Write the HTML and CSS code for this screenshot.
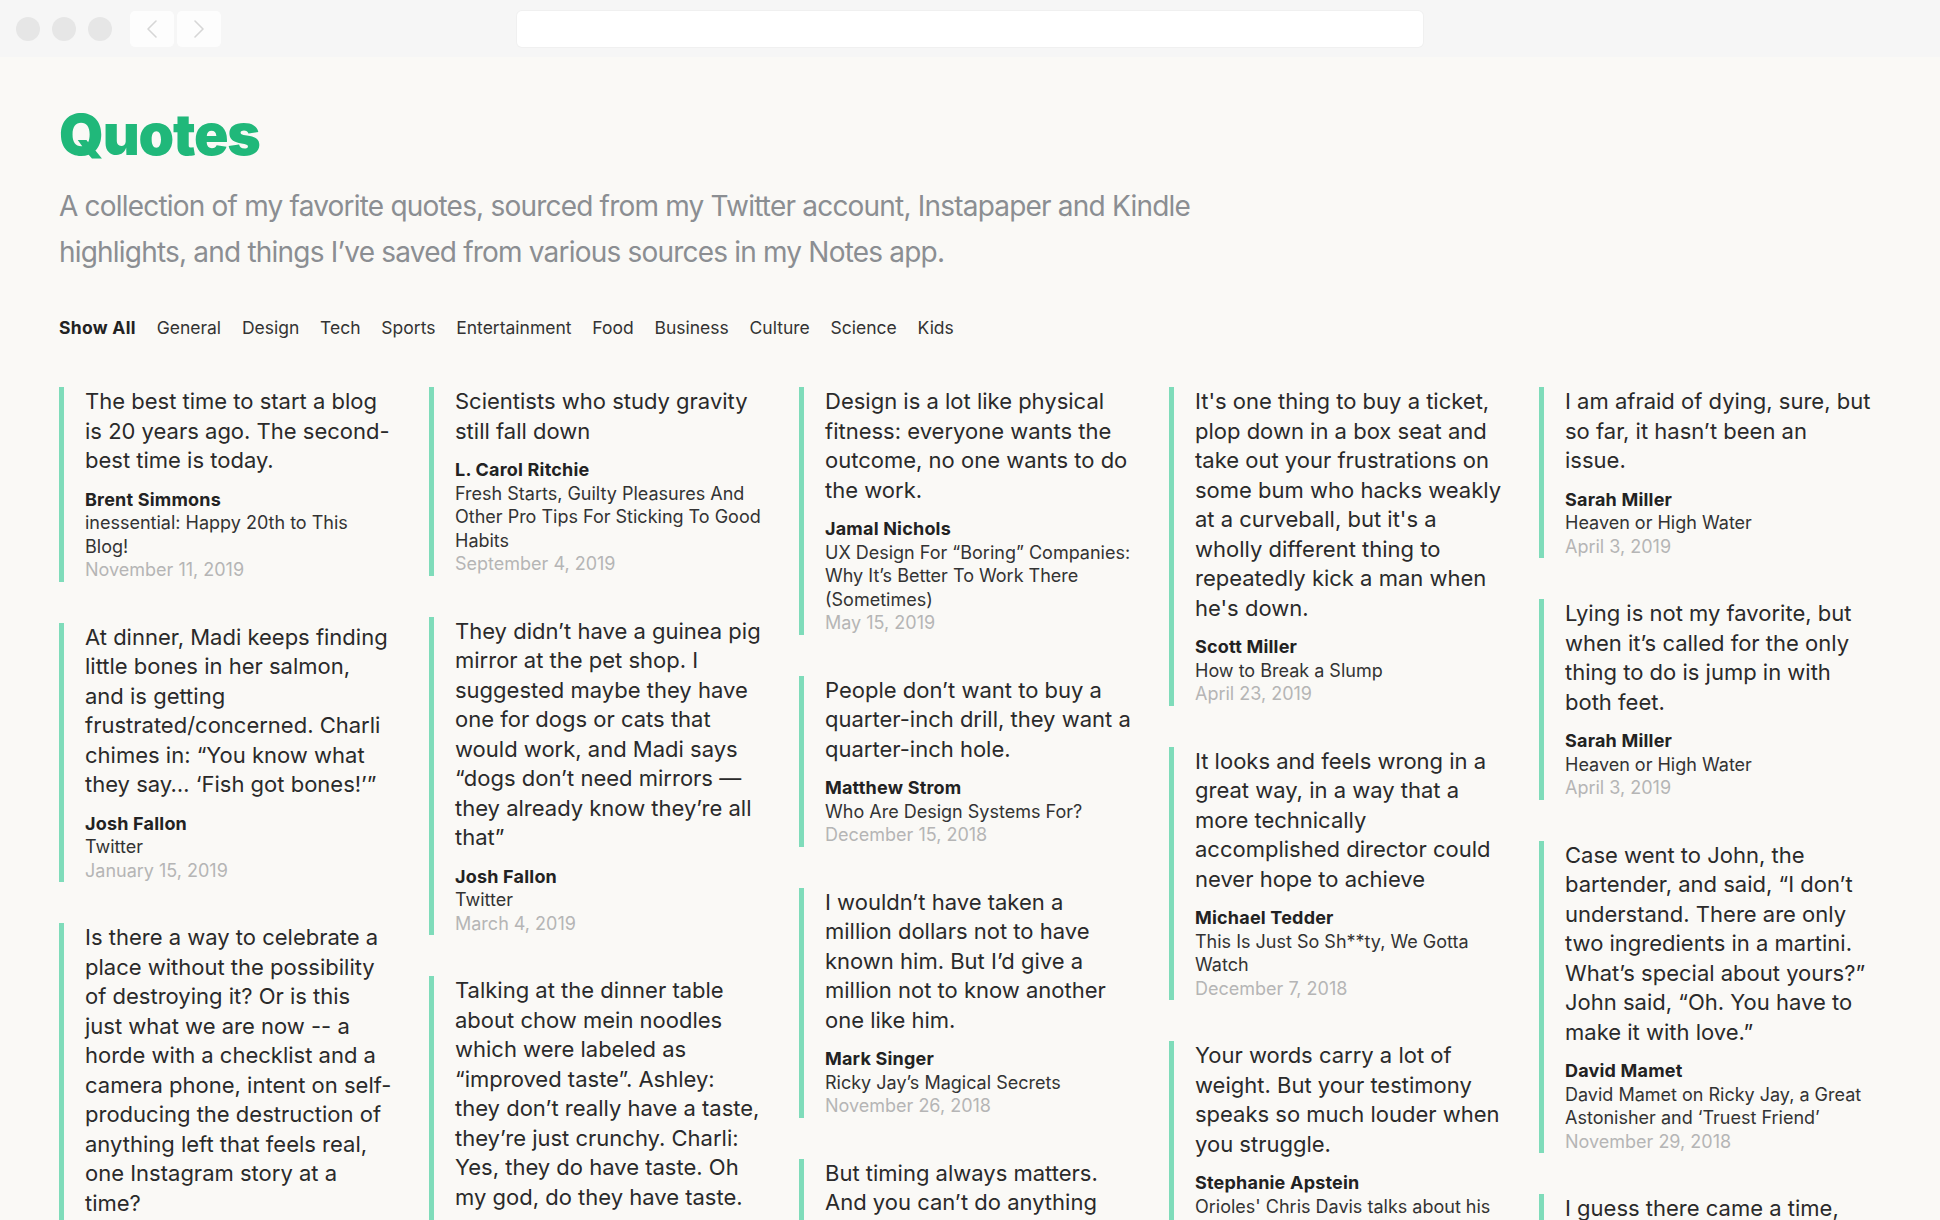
FILE: index.html
```html
<!DOCTYPE html>
<html lang="en">
<head>
    <meta charset="UTF-8">
    <meta name="viewport" content="width=device-width, initial-scale=1.0">
    <title>Quotes</title>
    <link rel="stylesheet" href="styles.css">
</head>
<body>
    <div class="window">
        <div class="toolbar">
            <div class="lights">
                <span class="light"></span>
                <span class="light"></span>
                <span class="light"></span>
            </div>
            <div class="nav-buttons">
                <button class="nav-btn" aria-label="Back">
                    <svg width="14" height="20" viewBox="0 0 14 20"><polyline points="11,2 3,10 11,18" fill="none" stroke="#d6d6d6" stroke-width="1.6" stroke-linecap="round" stroke-linejoin="round"/></svg>
                </button>
                <button class="nav-btn" aria-label="Forward">
                    <svg width="14" height="20" viewBox="0 0 14 20"><polyline points="3,2 11,10 3,18" fill="none" stroke="#d6d6d6" stroke-width="1.6" stroke-linecap="round" stroke-linejoin="round"/></svg>
                </button>
            </div>
            <div class="address"></div>
        </div>

        <main class="page">
            <header>
                <h1>Quotes</h1>
                <p class="intro">A collection of my favorite quotes, sourced from my Twitter account, Instapaper and Kindle highlights, and things I’ve saved from various sources in my Notes app.</p>
            </header>

            <nav class="filters">
                <a href="#" class="active">Show All</a>
                <a href="#">General</a>
                <a href="#">Design</a>
                <a href="#">Tech</a>
                <a href="#">Sports</a>
                <a href="#">Entertainment</a>
                <a href="#">Food</a>
                <a href="#">Business</a>
                <a href="#">Culture</a>
                <a href="#">Science</a>
                <a href="#">Kids</a>
            </nav>

            <div class="quotes">
                <div class="column">
                    <blockquote class="quote">
                        <p>The best time to start a blog is 20 years ago. The second-best time is today.</p>
                        <cite>Brent Simmons</cite>
                        <span class="source">inessential: Happy 20th to This Blog!</span>
                        <time>November 11, 2019</time>
                    </blockquote>
                    <blockquote class="quote">
                        <p>At dinner, Madi keeps finding little bones in her salmon, and is getting frustrated/concerned. Charli chimes in: “You know what they say… ‘Fish got bones!’”</p>
                        <cite>Josh Fallon</cite>
                        <span class="source">Twitter</span>
                        <time>January 15, 2019</time>
                    </blockquote>
                    <blockquote class="quote">
                        <p>Is there a way to celebrate a place without the possibility of destroying it? Or is this just what we are now -- a horde with a checklist and a camera phone, intent on self-producing the destruction of anything left that feels real, one Instagram story at a time?</p>
                    </blockquote>
                </div>

                <div class="column">
                    <blockquote class="quote">
                        <p>Scientists who study gravity still fall down</p>
                        <cite>L. Carol Ritchie</cite>
                        <span class="source">Fresh Starts, Guilty Pleasures And Other Pro Tips For Sticking To Good Habits</span>
                        <time>September 4, 2019</time>
                    </blockquote>
                    <blockquote class="quote">
                        <p>They didn’t have a guinea pig mirror at the pet shop. I suggested maybe they have one for dogs or cats that would work, and Madi says “dogs don’t need mirrors — they already know they’re all that”</p>
                        <cite>Josh Fallon</cite>
                        <span class="source">Twitter</span>
                        <time>March 4, 2019</time>
                    </blockquote>
                    <blockquote class="quote">
                        <p>Talking at the dinner table about chow mein noodles which were labeled as “improved taste”. Ashley: they don’t really have a taste, they’re just crunchy. Charli: Yes, they do have taste. Oh my god, do they have taste.</p>
                    </blockquote>
                </div>

                <div class="column">
                    <blockquote class="quote">
                        <p>Design is a lot like physical fitness: everyone wants the outcome, no one wants to do the work.</p>
                        <cite>Jamal Nichols</cite>
                        <span class="source">UX Design For “Boring” Companies: Why It’s Better To Work There (Sometimes)</span>
                        <time>May 15, 2019</time>
                    </blockquote>
                    <blockquote class="quote">
                        <p>People don’t want to buy a quarter-inch drill, they want a quarter-inch hole.</p>
                        <cite>Matthew Strom</cite>
                        <span class="source">Who Are Design Systems For?</span>
                        <time>December 15, 2018</time>
                    </blockquote>
                    <blockquote class="quote">
                        <p>I wouldn’t have taken a million dollars not to have known him. But I’d give a million not to know another one like him.</p>
                        <cite>Mark Singer</cite>
                        <span class="source">Ricky Jay’s Magical Secrets</span>
                        <time>November 26, 2018</time>
                    </blockquote>
                    <blockquote class="quote">
                        <p>But timing always matters. And you can’t do anything about timing.</p>
                    </blockquote>
                </div>

                <div class="column">
                    <blockquote class="quote">
                        <p>It's one thing to buy a ticket, plop down in a box seat and take out your frustrations on some bum who hacks weakly at a curveball, but it's a wholly different thing to repeatedly kick a man when he's down.</p>
                        <cite>Scott Miller</cite>
                        <span class="source">How to Break a Slump</span>
                        <time>April 23, 2019</time>
                    </blockquote>
                    <blockquote class="quote">
                        <p>It looks and feels wrong in a great way, in a way that a more technically accomplished director could never hope to achieve</p>
                        <cite>Michael Tedder</cite>
                        <span class="source">This Is Just So Sh**ty, We Gotta Watch</span>
                        <time>December 7, 2018</time>
                    </blockquote>
                    <blockquote class="quote">
                        <p>Your words carry a lot of weight. But your testimony speaks so much louder when you struggle.</p>
                        <cite>Stephanie Apstein</cite>
                        <span class="source">Orioles' Chris Davis talks about his struggles</span>
                    </blockquote>
                </div>

                <div class="column">
                    <blockquote class="quote">
                        <p>I am afraid of dying, sure, but so far, it hasn’t been an issue.</p>
                        <cite>Sarah Miller</cite>
                        <span class="source">Heaven or High Water</span>
                        <time>April 3, 2019</time>
                    </blockquote>
                    <blockquote class="quote">
                        <p>Lying is not my favorite, but when it’s called for the only thing to do is jump in with both feet.</p>
                        <cite>Sarah Miller</cite>
                        <span class="source">Heaven or High Water</span>
                        <time>April 3, 2019</time>
                    </blockquote>
                    <blockquote class="quote">
                        <p>Case went to John, the bartender, and said, “I don’t understand. There are only two ingredients in a martini. What’s special about yours?” John said, “Oh. You have to make it with love.”</p>
                        <cite>David Mamet</cite>
                        <span class="source">David Mamet on Ricky Jay, a Great Astonisher and ‘Truest Friend’</span>
                        <time>November 29, 2018</time>
                    </blockquote>
                    <blockquote class="quote">
                        <p>I guess there came a time, when I was about ten, that I stopped.</p>
                    </blockquote>
                </div>
            </div>
        </main>
    </div>
</body>
</html>
```

FILE: styles.css
```css
html, body {
    margin: 0;
    padding: 0;
}
body {
    font-family: Inter, "Noto Sans", sans-serif;
    background-color: #faf9f6;
    color: #2b2b2b;
}
.window {
    height: 100vh;
    overflow: hidden;
}

/* browser chrome */
.toolbar {
    height: 57px;
    background: #f6f6f6;
    display: flex;
    align-items: center;
    padding: 0 16px;
    box-sizing: border-box;
}
.lights {
    display: flex;
    gap: 12px;
}
.light {
    width: 24px;
    height: 24px;
    border-radius: 50%;
    background: #e6e6e6;
}
.nav-buttons {
    display: flex;
    gap: 3px;
    margin-left: 18px;
}
.nav-btn {
    width: 44px;
    height: 36px;
    border: none;
    border-radius: 5px;
    background: #fdfdfd;
    display: flex;
    align-items: center;
    justify-content: center;
    padding: 0;
}
.address {
    width: 906px;
    height: 36px;
    margin-left: 296px;
    background: #ffffff;
    border-radius: 5px;
    box-shadow: 0 0 0 1px #f0f0f0;
}

/* page */
.page {
    padding: 0 59px;
}
header h1 {
    font-size: 57px;
    font-weight: 900;
    color: #20b87a;
    margin: 46px 0 0;
    line-height: 64px;
    letter-spacing: -1.2px;
}
.intro {
    font-size: 28px;
    line-height: 46px;
    color: #8b8e92;
    max-width: 1160px;
    margin: 16px 0 0;
    letter-spacing: -0.8px;
}
.filters {
    display: flex;
    gap: 20.8px;
    margin-top: 42px;
}
.filters a {
    font-size: 17.5px;
    color: #333;
    text-decoration: none;
}
.filters a.active {
    font-weight: 700;
    color: #222;
    letter-spacing: 0.3px;
}

.quotes {
    display: grid;
    grid-template-columns: repeat(5, 1fr);
    column-gap: 28px;
    margin-top: 49px;
}
.column {
    display: flex;
    flex-direction: column;
    gap: 41px;
}
.quote {
    margin: 0;
    border-left: 5px solid #7fdcba;
    padding: 0 9px 0 21px;
    font-size: 18px;
    line-height: 23.5px;
}
.quote p {
    font-size: 22px;
    line-height: 29.5px;
    margin: 0 0 12px;
    color: #2a2a2a;
}
.quote cite {
    display: block;
    font-style: normal;
    font-weight: 700;
    color: #222;
    letter-spacing: 0.2px;
}
.quote .source {
    display: block;
    color: #333;
}
.quote time {
    display: block;
    color: #b5b5b5;
}
```
